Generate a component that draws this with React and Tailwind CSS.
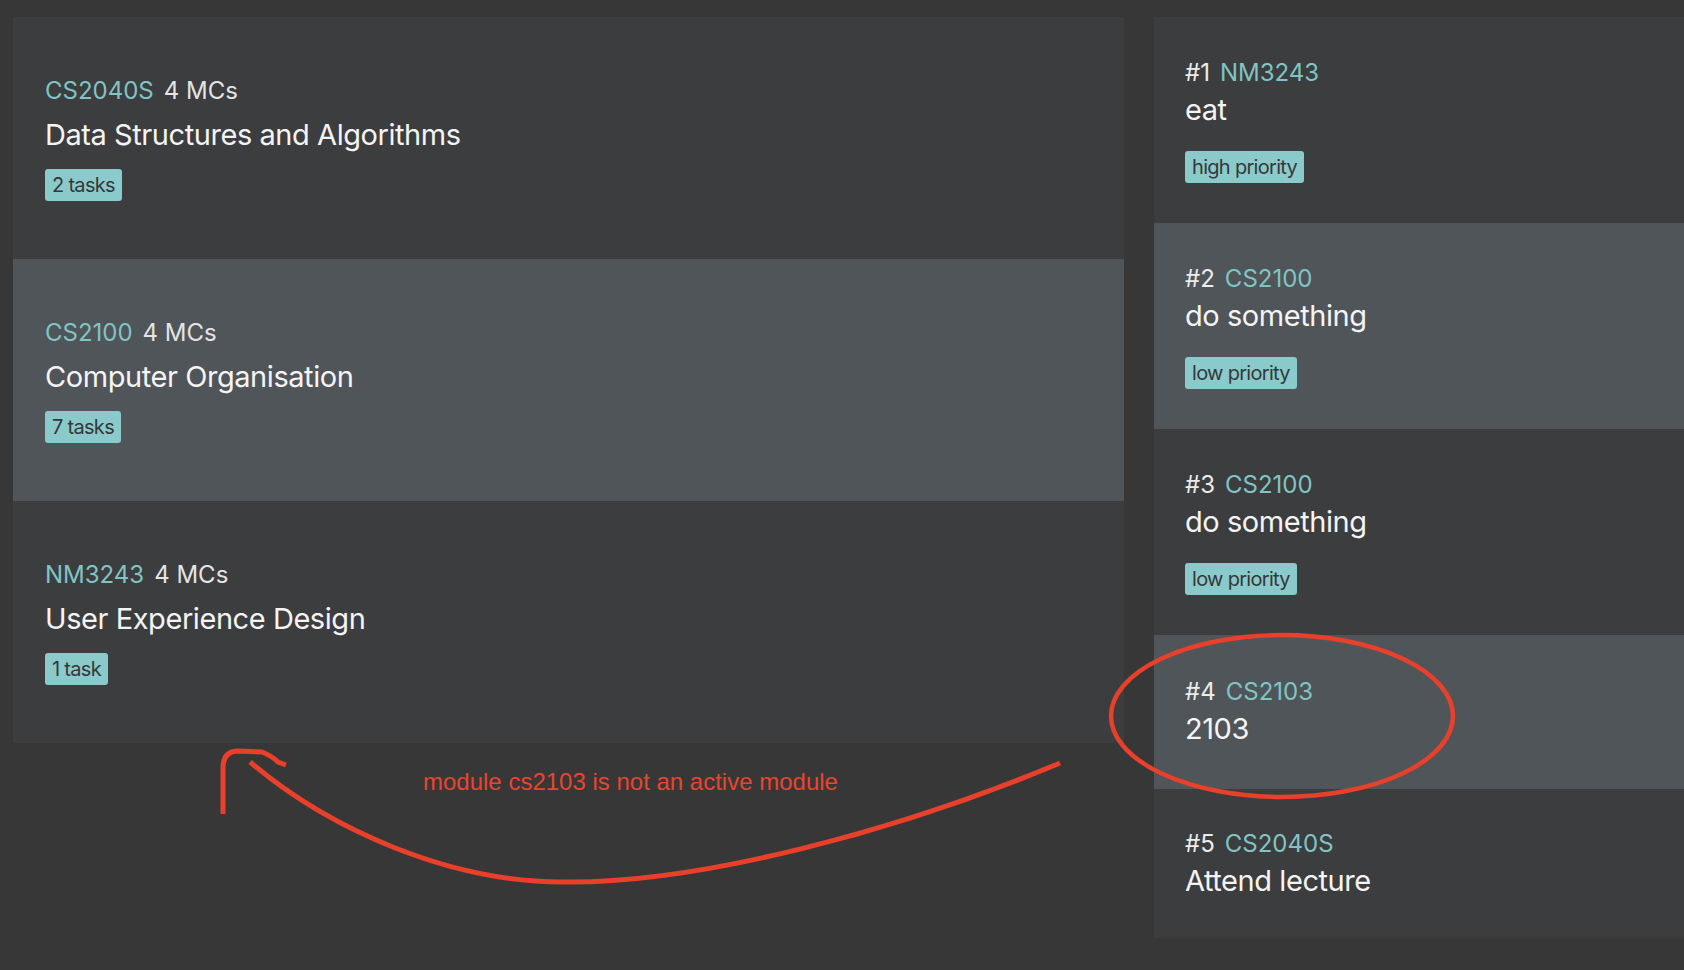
import React from 'react';

const modules = [
  { code: 'CS2040S', mcs: '4 MCs', name: 'Data Structures and Algorithms', tasks: '2 tasks' },
  { code: 'CS2100', mcs: '4 MCs', name: 'Computer Organisation', tasks: '7 tasks' },
  { code: 'NM3243', mcs: '4 MCs', name: 'User Experience Design', tasks: '1 task' },
];

const tasks = [
  { id: 1, code: 'NM3243', title: 'eat', tag: 'high priority', h: 'h-[206px]' },
  { id: 2, code: 'CS2100', title: 'do something', tag: 'low priority', h: 'h-[206px]' },
  { id: 3, code: 'CS2100', title: 'do something', tag: 'low priority', h: 'h-[206px]' },
  { id: 4, code: 'CS2103', title: '2103', h: 'h-[154px]' },
  { id: 5, code: 'CS2040S', title: 'Attend lecture', h: 'h-[149px]' },
];

function Tag({ children }) {
  return (
    <span className="inline-flex items-center h-8 px-[7px] rounded-[3px] bg-[#8bcaca] text-[#35383a] text-[20px] tracking-[-0.035em]">
      {children}
    </span>
  );
}

function ModuleCard({ mod, index }) {
  const bg = index % 2 === 1 ? 'bg-[#505559]' : 'bg-[#3c3d3f]';
  return (
    <div className={`h-[242px] flex flex-col justify-center items-start px-8 ${bg}`}>
      <div className="text-[24px] leading-[30px] flex gap-[10px]">
        <span className="text-[#80c4c4]">{mod.code}</span>
        <span className="text-[#e4e4e4]">{mod.mcs}</span>
      </div>
      <div className="mt-[11px] text-[29px] leading-[36px] text-[#f4f4f4] tracking-[-0.015em]">{mod.name}</div>
      <div className="mt-4">
        <Tag>{mod.tasks}</Tag>
      </div>
    </div>
  );
}

function TaskCard({ task, index }) {
  const bg = index % 2 === 1 ? 'bg-[#505559]' : 'bg-[#3c3d3f]';
  return (
    <div className={`${task.h} flex flex-col justify-center items-start px-[31px] ${bg}`}>
      <div className="text-[24px] leading-[30px] flex gap-[10px]">
        <span className="text-[#ececec]">#{task.id}</span>
        <span className="text-[#80c4c4]">{task.code}</span>
      </div>
      <div className="mt-1 text-[29px] leading-[36px] text-[#f4f4f4] tracking-[-0.015em]">{task.title}</div>
      {task.tag && (
        <div className="mt-[23px]">
          <Tag>{task.tag}</Tag>
        </div>
      )}
    </div>
  );
}

export default function App() {
  return (
    <div className="relative w-[1684px] h-[970px] overflow-hidden bg-[#373737] font-['Inter','Noto_Sans',sans-serif]">
      <div className="flex items-start gap-[30px] pt-[17px] pl-[13px]">
        <div className="w-[1111px] flex flex-col">
          {modules.map((m, i) => (
            <ModuleCard key={m.code} mod={m} index={i} />
          ))}
        </div>
        <div className="flex-1 flex flex-col">
          {tasks.map((t, i) => (
            <TaskCard key={t.id} task={t} index={i} />
          ))}
        </div>
      </div>

      {/* hand-drawn annotation */}
      <svg className="absolute inset-0 pointer-events-none" width="1684" height="970" viewBox="0 0 1684 970" fill="none">
        <ellipse cx="1282" cy="716" rx="171" ry="81" stroke="#e8402a" strokeWidth="4.5" />
        <path
          d="M1060 763 C900 830, 700 884, 562 882 C450 882, 330 830, 250 762"
          stroke="#e8402a"
          strokeWidth="5"
          strokeLinecap="butt"
        />
        <path
          d="M223 814 L223 768 Q223 751 238 751 L262 752 Q272 756 278 762 L286 765"
          stroke="#e8402a"
          strokeWidth="5"
        />
      </svg>
      <div className="absolute left-[423px] top-[770px] text-[24px] leading-[24px] text-[#e8452f] font-['Liberation_Sans',Arial,sans-serif] whitespace-nowrap">
        module cs2103 is not an active module
      </div>
    </div>
  );
}
